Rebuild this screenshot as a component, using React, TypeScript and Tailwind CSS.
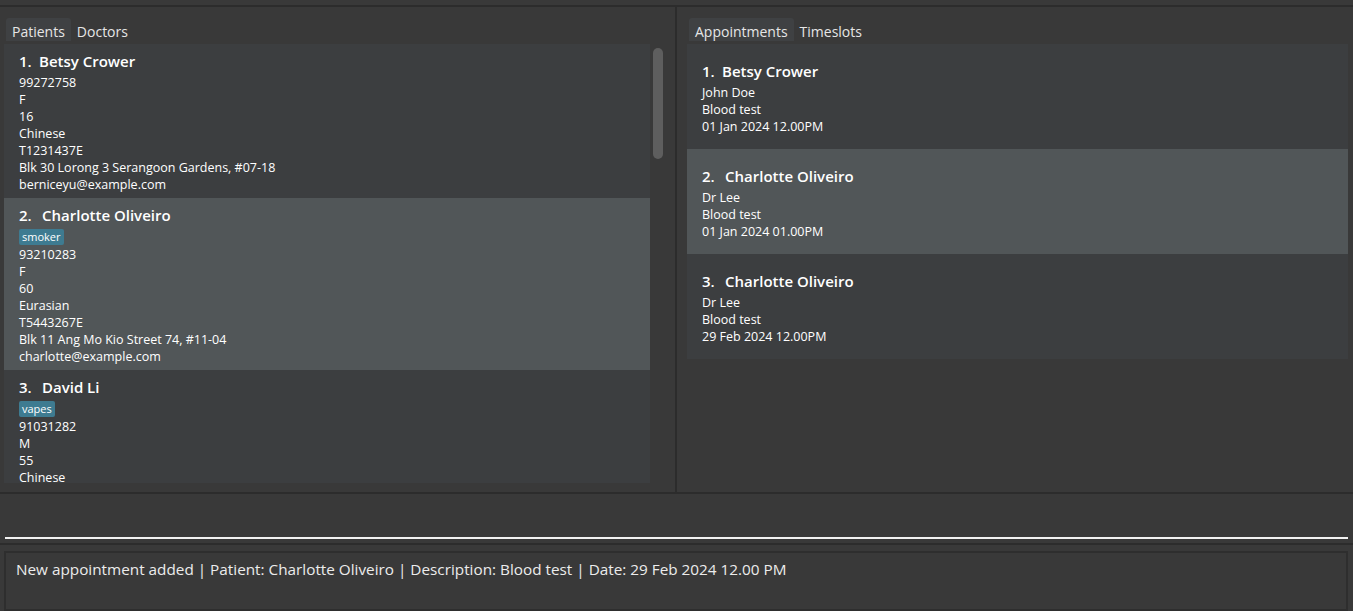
const patients = [
  {
    name: "Betsy Crower",
    tags: [] as string[],
    lines: ["99272758", "F", "16", "Chinese", "T1231437E", "Blk 30 Lorong 3 Serangoon Gardens, #07-18", "berniceyu@example.com"],
  },
  {
    name: "Charlotte Oliveiro",
    tags: ["smoker"],
    lines: ["93210283", "F", "60", "Eurasian", "T5443267E", "Blk 11 Ang Mo Kio Street 74, #11-04", "charlotte@example.com"],
  },
  {
    name: "David Li",
    tags: ["vapes"],
    lines: ["91031282", "M", "55", "Chinese", "T1234567D", "Blk 436 Serangoon Gardens Street 26, #16-43", "lidavid@example.com"],
  },
];

const appointments = [
  { patient: "Betsy Crower", doctor: "John Doe", desc: "Blood test", date: "01 Jan 2024 12.00PM" },
  { patient: "Charlotte Oliveiro", doctor: "Dr Lee", desc: "Blood test", date: "01 Jan 2024 01.00PM" },
  { patient: "Charlotte Oliveiro", doctor: "Dr Lee", desc: "Blood test", date: "29 Feb 2024 12.00PM" },
];

function Tabs({ items }: { items: string[] }) {
  return (
    <div className="flex h-[23px] items-stretch">
      {items.map((t, i) => (
        <div
          key={t}
          className={`flex items-center rounded-t-[3px] px-[6px] pt-[3px] text-[14px] text-[#e6e6e6] ${i === 0 ? "bg-[#3f4143]" : ""}`}
        >
          {t}
        </div>
      ))}
    </div>
  );
}

function Title({ n, name }: { n: number; name: string }) {
  return (
    <div className="flex h-[25px] items-start text-[15px] leading-[24px] font-semibold">
      <span className={n === 1 ? "w-[20px]" : "w-[23px]"}>{n}.</span>
      <span>{name}</span>
    </div>
  );
}

export default function App() {
  return (
    <div
      className="flex h-[611px] w-full flex-col overflow-hidden bg-[#393939] text-white"
      style={{ fontFamily: '"Open Sans", "Noto Sans", sans-serif' }}
    >
      {/* menu strip */}
      <div className="h-[7px] shrink-0 border-b-2 border-[#2c2c2c]" />

      <div className="flex h-[485px] shrink-0">
        {/* patients / doctors */}
        <div className="flex w-[675px] flex-col pl-[4px] pt-[11px] pb-[9px]">
          <div className="pl-[2px]">
            <Tabs items={["Patients", "Doctors"]} />
          </div>
          <div className="mt-[3px] flex min-h-0 flex-1">
            <div className="w-[646px] overflow-hidden bg-[#3c3e40]">
              {patients.map((p, i) => (
                <div
                  key={p.name}
                  className={`px-[15px] pt-[5px] pb-[5px] ${i === 1 ? "bg-[#515658]" : "bg-[#3c3e40]"}`}
                >
                  <Title n={i + 1} name={p.name} />
                  {p.tags.length > 0 && (
                    <div className="flex h-[18px] gap-1 pt-[1px]">
                      {p.tags.map((t) => (
                        <span
                          key={t}
                          className="h-[16px] rounded-[2px] bg-[#3e7b91] px-[3px] text-[11px] leading-[16px] font-medium"
                        >
                          {t}
                        </span>
                      ))}
                    </div>
                  )}
                  {p.lines.map((l) => (
                    <div key={l} className="h-[17px] text-[12.5px] leading-[17px]">
                      {l}
                    </div>
                  ))}
                </div>
              ))}
            </div>
            <div className="w-[15px] pl-[3px] pt-[4px]">
              <div className="h-[111px] w-[10px] rounded-[5px] bg-[#5e5e5e]" />
            </div>
          </div>
        </div>

        <div className="w-[2px] bg-[#2c2c2c]" />

        {/* appointments / timeslots */}
        <div className="flex flex-1 flex-col pl-[10px] pr-[5px] pt-[11px]">
          <div className="pl-[2px]">
            <Tabs items={["Appointments", "Timeslots"]} />
          </div>
          <div className="mt-[3px]">
            {appointments.map((a, i) => (
              <div
                key={i}
                className={`h-[105px] px-[15px] pt-[15px] ${i === 1 ? "bg-[#515658]" : "bg-[#3c3e40]"}`}
              >
                <Title n={i + 1} name={a.patient} />
                <div className="h-[17px] text-[12.5px] leading-[17px]">{a.doctor}</div>
                <div className="h-[17px] text-[12.5px] leading-[17px]">{a.desc}</div>
                <div className="h-[17px] text-[12.5px] leading-[17px]">{a.date}</div>
              </div>
            ))}
          </div>
        </div>
      </div>

      <div className="h-[2px] shrink-0 bg-[#2c2c2c]" />

      {/* command box */}
      <div className="h-[49px] shrink-0 px-[5px] pt-[43px]">
        <div className="h-[2px] w-[1343px] bg-[#f2f2f2]" />
      </div>

      <div className="h-[2px] shrink-0 bg-[#2c2c2c]" />

      {/* result display */}
      <div className="flex-1 pl-[4px] pr-[5px] pt-[6px]">
        <div className="h-full border-2 border-[#2e2e2e] px-[10px] pt-[5px] text-[15.3px] leading-[22px] text-[#ececec]">
          New appointment added | Patient: Charlotte Oliveiro | Description: Blood test | Date: 29 Feb 2024 12.00 PM
        </div>
      </div>
    </div>
  );
}
